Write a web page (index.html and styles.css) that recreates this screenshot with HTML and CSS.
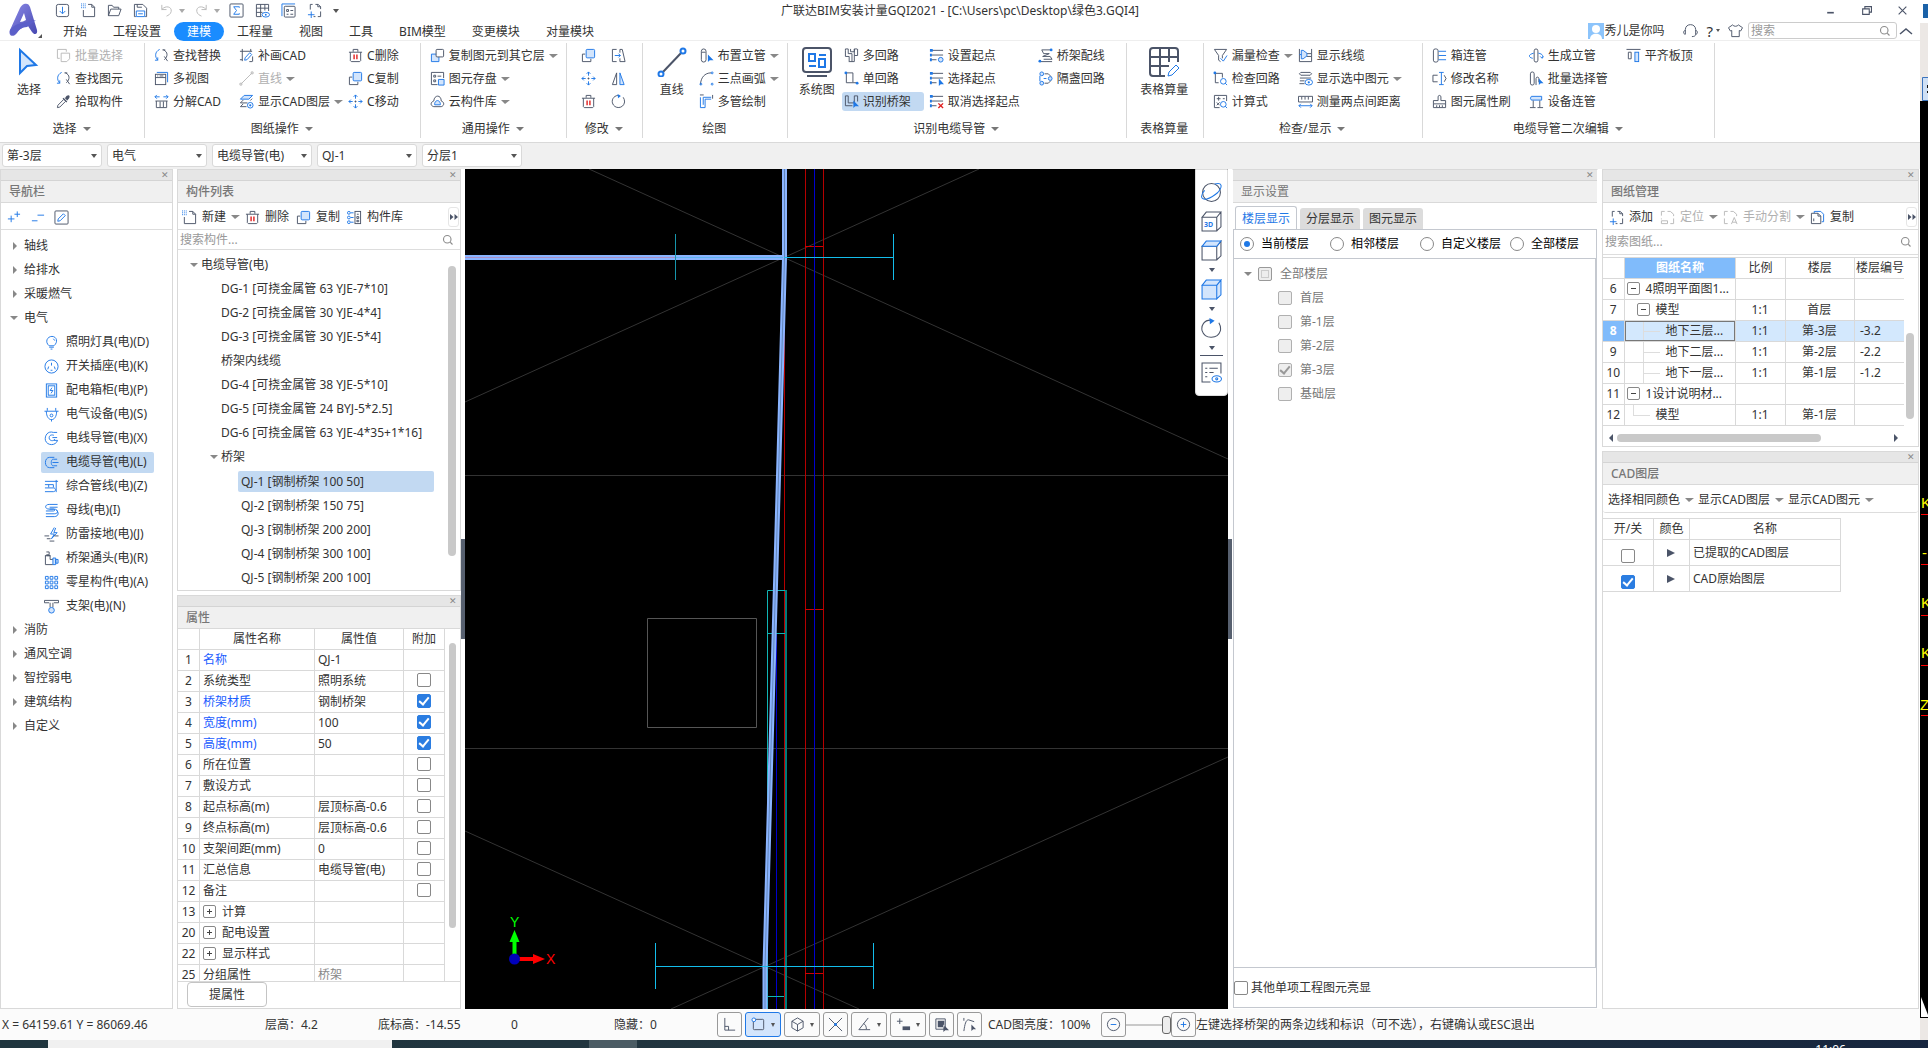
FILE: index.html
```
<!DOCTYPE html>
<html lang="zh-CN">
<head>
  <meta charset="UTF-8">
  <meta name="viewport" content="width=device-width, initial-scale=1">
  <title>广联达BIM安装计量GQI2021</title>
  <link rel="stylesheet" href="styles.css">
</head>
<body>
  <!-- Icon sprite -->
  <svg class="sprite" aria-hidden="true">
    <symbol id="i-import" viewBox="0 0 16 16"><rect class="k" x="1.5" y="1.5" width="13" height="13" rx="2"/><path class="b" d="M8 4v7M5 8.5l3 3 3-3"/></symbol>
    <symbol id="i-new" viewBox="0 0 16 16"><path class="k" d="M7.500 1.500h4l3 3v10h-12v-7M11.500 1.500v3h3"/><path class="bd" d="M0 1h5M0 3h5M0 5h5"/></symbol>
    <symbol id="i-open" viewBox="0 0 16 16"><path class="k" d="M1.500 13.500v-11h4l1.500 2h5.500v2M1.500 13.500l2.500-7h11l-2.500 7z"/></symbol>
    <symbol id="i-save" viewBox="0 0 16 16"><path class="k" d="M3 14.500H1.500v-13h9l4 4v9H13M4.500 1.500v3h5"/><path class="b" d="M3.500 14.500v-6h9v6zM5.500 11.500h5"/></symbol>
    <symbol id="i-undo" viewBox="0 0 16 16"><path class="g" d="M3 2v5h5M3 7c4-5 11-3 10 2-.5 3-3 4-5 5"/></symbol>
    <symbol id="i-redo" viewBox="0 0 16 16"><path class="g" d="M13 2v5H8M13 7C9 2 2 4 3 9c.5 3 3 4 5 5"/></symbol>
    <symbol id="i-sum" viewBox="0 0 16 16"><rect class="k" x="1" y="1" width="14" height="14" rx="1"/><path class="b" d="M11 5V4H5l3 4-3 4h6v-1"/></symbol>
    <symbol id="i-gridview" viewBox="0 0 16 16"><path class="k" d="M7 14.500H1.500v-13h13v7M1.500 5.500h13M1.500 10H8M6 1.500v13M10.500 1.500V8"/><ellipse class="b" cx="11.500" cy="12.500" rx="4" ry="2.500"/><circle class="bf" cx="11.500" cy="12.500" r="1"/></symbol>
    <symbol id="i-form" viewBox="0 0 16 16"><path class="b" d="M1 14V1h14"/><rect class="k" x="3.500" y="3.500" width="11.500" height="11.500" rx="1"/><path class="k" d="M6 7h2v2H6zM10 8h3M6 12h2M10 12h3"/></symbol>
    <symbol id="i-newdoc" viewBox="0 0 16 16"><path class="k" d="M3.500 7V1.500H6M9 1.500h3l2.500 2.500v2.500M14.500 9v5.500h-3M9 14.500H7M11.500 1.500V4h3"/><path class="b" d="M4.500 9v7M1 12.500h7"/></symbol>
    <symbol id="i-copy" viewBox="0 0 16 16"><path class="k" d="M4.500 6.500h-3v8h9v-3"/><rect class="lb" x="5.500" y="1.500" width="9" height="9" rx="1"/></symbol>
    <symbol id="i-copyg" viewBox="0 0 16 16"><path class="g" d="M4 11H1.500V1.500H11V4"/><path class="g" d="M5.500 5.500h9v6l-3 3h-6z"/></symbol>
    <symbol id="i-copyk" viewBox="0 0 16 16"><path class="lb" d="M1.500 6.500h8v8h-8z"/><rect class="kw" x="6.500" y="1.500" width="8" height="8" rx="1"/></symbol>
    <symbol id="i-find" viewBox="0 0 16 16"><path class="b" d="M6 1.500C1 4 .500 9 4 13M4 13v-3M4 13H1"/><path class="k" d="M10 2c5 2 5 7 1 10.500M9 2h3M11 9l3.500 5"/></symbol>
    <symbol id="i-pick" viewBox="0 0 16 16"><path class="kf" d="M8 4l4 4-1 1-4-4zM10 4c2-4 6-3 4 .500L12 7 9 4z"/><path class="k" d="M8 6l-6 6-.5 2.500L4 14l6-6"/></symbol>
    <symbol id="i-views" viewBox="0 0 16 16"><path class="b" d="M3 1.500h11.500V12"/><rect class="k" x="1.500" y="3.500" width="11" height="11"/><path class="k" d="M1.500 7h11M3.500 5.300h1M6 5.300h4"/></symbol>
    <symbol id="i-split" viewBox="0 0 16 16"><path class="b" d="M6 3H1M3 1L1 3l2 2M10 3h5M13 1l2 2-2 2"/><path class="k" d="M1.500 7.500h13M2.500 14.500v-7M13.500 14.500v-7M2.500 14.500h11M6.500 14v-6M10 14v-6"/></symbol>
    <symbol id="i-draw" viewBox="0 0 16 16"><path class="k" d="M1 3.500h13M3.500 1v13M3.500 12.500H1M12.500 3.500V1M14.500 9v5.500M11 14.500h3"/><path class="b" d="M6 13l.5-2.500L11.500 5l2 2L8.500 12.500z"/></symbol>
    <symbol id="i-lineg" viewBox="0 0 16 16"><path class="g" d="M2.500 13.500l11-11M1 13h2v2H1zM13 1h2v2h-2z"/></symbol>
    <symbol id="i-layers" viewBox="0 0 16 16"><path class="lb" d="M5.500 1.500h9l-4 4h-9z"/><path class="k" d="M12 7l2-2M9 9.500H1.500l3-3M8 13.500H1.500l3-3"/><circle class="b" cx="12" cy="12" r="3"/><circle class="bf" cx="12" cy="12" r="1.200"/></symbol>
    <symbol id="i-trash" viewBox="0 0 16 16"><path class="k" d="M1 4.500h14M5.500 4V1.500h5V4M2.500 4.500v9l1 1h9l1-1v-9"/><path class="r" d="M6.500 7v5M9.500 7v5"/></symbol>
    <symbol id="i-move" viewBox="0 0 16 16"><path class="b" d="M8 1v4M6 3l2-2 2 2M8 15v-4M6 13l2 2 2-2M1 8h4M3 6L1 8l2 2M15 8h-4M13 6l2 2-2 2"/><path class="k" d="M8 7v2M7 8h2"/></symbol>
    <symbol id="i-store" viewBox="0 0 16 16"><path class="k" d="M8 14.500H1.500v-13h13v6M4 4.500h2v2H4zM8 5.500h4M4 9.500h2v2H4z"/><path class="lb" d="M9 9h6v6H9z"/></symbol>
    <symbol id="i-cloud" viewBox="0 0 16 16"><path class="k" d="M4 13.500c-4-1-3.500-5 0-6 .5-7 8-7 8 0 3.500 1 3.500 5 0 6z"/><path class="lb" d="M5 11.500h6V10c-1-4-5-4-6 0z"/></symbol>
    <symbol id="i-extend" viewBox="0 0 16 16"><path class="k" d="M6 1.500H1.500v13H6M9.500 5V1.500H12l3 13H9.500V11"/><path class="b" d="M4 8h6M8 6l2 2-2 2"/></symbol>
    <symbol id="i-mirror" viewBox="0 0 16 16"><path class="k" d="M6 2v12.500H1.500z"/><path class="lb" d="M9.500 2v12.500H14z"/></symbol>
    <symbol id="i-rotate" viewBox="0 0 16 16"><path class="k" d="M9 1.500C4 1 .500 5 1.500 9.500c2 7 12 6.500 13-1 0-2-.5-3.500-1.500-5"/><path class="bf" d="M7 0l3.500 2L7.500 4.500z"/></symbol>
    <symbol id="i-riser" viewBox="0 0 16 16"><rect class="k" x="2.500" y="1" width="5" height="14" rx="2.500"/><path class="k" d="M3 4.500h4"/><path class="bf" d="M9.500 7v8l2-2h4z"/></symbol>
    <symbol id="i-arc" viewBox="0 0 16 16"><path class="k" d="M1.500 14.500C2 7 6 2 13 2"/><circle class="b" cx="14" cy="2" r="1"/><circle class="b" cx="14" cy="14" r="1"/><circle class="b" cx="2" cy="14" r="1"/></symbol>
    <symbol id="i-pipes" viewBox="0 0 16 16"><path class="b" d="M1.500 3.500v11h5v-9H13M13 3.500H4.500v8"/><path class="k" d="M1 1h4M14.500 1v4"/></symbol>
    <symbol id="i-multi" viewBox="0 0 16 16"><path class="k" d="M1.500 3v6h4v5M4.500 1v5h4v8.500M11 14.500V8h3.500V1M7 1v3h4v-3M5 14.500h6M1.500 3V1h3M11 8V1h3"/></symbol>
    <symbol id="i-single" viewBox="0 0 16 16"><path class="k" d="M2.500 2v10.500H13M2.500 2h7v10"/><circle class="bf" cx="2" cy="2" r="1.500"/><circle class="bf" cx="14" cy="13" r="1.500"/></symbol>
    <symbol id="i-tray" viewBox="0 0 16 16"><path class="k" d="M1.500 2v10.500H9M4.500 2v7.500H11V2M1.500 2h3M14.500 2v6M11 2h3.500"/><path class="bf" d="M10 7v8l2-2h4z"/></symbol>
    <symbol id="i-start" viewBox="0 0 16 16"><path class="k" d="M2 2.500h13M2 7.500h13M2 12.500h6"/><path class="bf" d="M1 1h3v3H1zM1 6h2v3H1zM1 11h2v3H1z"/><circle class="lb" cx="12.500" cy="12.500" r="2.500"/></symbol>
    <symbol id="i-pickstart" viewBox="0 0 16 16"><path class="k" d="M2 2.500h13M2 7.500h13M2 12.500h6"/><path class="bf" d="M1 1h3v3H1zM1 6h2v3H1zM1 11h2v3H1zM10.500 8v8l2-2h3.500z"/></symbol>
    <symbol id="i-unstart" viewBox="0 0 16 16"><path class="k" d="M2 2.500h13M2 7.500h13M2 12.500h6"/><path class="bf" d="M1 1h3v3H1zM1 6h2v3H1zM1 11h2v3H1z"/><path class="r" d="M10 10l5 5M15 10l-5 5"/></symbol>
    <symbol id="i-wire" viewBox="0 0 16 16"><path class="k" d="M14 2H4l2 4h6M12 6l-7 3h8M13 9l2 3H6M2 14.500h13"/><circle class="bf" cx="14" cy="2" r="1.500"/><circle class="bf" cx="2" cy="14" r="1.500"/></symbol>
    <symbol id="i-box" viewBox="0 0 16 16"><path class="k" d="M7 3h4l3 3M14 10l-3 3H7"/><circle class="lb" cx="4" cy="3" r="2"/><circle class="lb" cx="4" cy="13" r="2"/><circle class="lb" cx="13" cy="8" r="2"/><path class="b" d="M2 5v6M6 8h3"/></symbol>
    <symbol id="i-filter" viewBox="0 0 16 16"><path class="k" d="M1.500 1.500h13L10 8v3M1.500 1.500L6 8v5l2 1.500"/><path class="b" d="M8 11l3 3 4-6"/></symbol>
    <symbol id="i-checkloop" viewBox="0 0 16 16"><path class="k" d="M2.500 3v9.500H6M3 2.500h7V7"/><circle class="bf" cx="2" cy="2" r="1.500"/><circle class="b" cx="11" cy="11" r="3"/><path class="b" d="M13 13l2 2"/></symbol>
    <symbol id="i-calc" viewBox="0 0 16 16"><path class="k" d="M7 14.500H1.500v-13h13v6M4 5h4M6 3v4M10.500 5h2M4 9l3 3M7 9l-3 3"/><circle class="b" cx="11" cy="11" r="3"/><path class="b" d="M13 13l2 2"/></symbol>
    <symbol id="i-cable" viewBox="0 0 16 16"><path class="k" d="M1.500 1v13.500h13V1M9 6h5M9 9h5"/><path class="lb" d="M3.500 2.500h2l4 3v3l-4 3h-2zM1.500 7h2"/></symbol>
    <symbol id="i-showsel" viewBox="0 0 16 16"><path class="k" d="M3 1.500h10l1.500 1.500L13 4.500H3L1.500 3zM14 7.500H2M2 10.500h5M1.500 13.500H7"/><ellipse class="b" cx="11.500" cy="12" rx="4" ry="3"/><circle class="bf" cx="11.500" cy="12" r="1.200"/></symbol>
    <symbol id="i-measure" viewBox="0 0 16 16"><path class="k" d="M.500 8.500v-6h15v6zM4 3v3M7.500 3v3M11 3v3"/><path class="b" d="M1 12.500h14M3 10.500l-2 2 2 2M13 10.500l2 2-2 2"/></symbol>
    <symbol id="i-boxpipe" viewBox="0 0 16 16"><rect class="k" x="1.500" y="1" width="5" height="14" rx="2"/><path class="b" d="M7 3.500h8M7 8h8M7 12.500h8"/></symbol>
    <symbol id="i-rename" viewBox="0 0 16 16"><path class="k" d="M6 4.500H1v7h5M13 4.500l2 3.500-2 3.500"/><path class="b" d="M10 1.500v13M7.500 1.500h5M7.500 14.500h5"/></symbol>
    <symbol id="i-brush" viewBox="0 0 16 16"><path class="k" d="M6.500 7V3c0-2 3-2 3 0v4h5v3.500h-13V7zM1.500 10.500v4h13v-4M5 14v-2M8 14v-2M11 14v-2"/></symbol>
    <symbol id="i-genriser" viewBox="0 0 16 16"><rect class="k" x="5.500" y="1" width="4" height="14" rx="2"/><path class="b" d="M5 5.500C-1 7-1 10 4 11M10 5.500c5 1 5 3 4 5M12 9l2 2 1.500-2"/></symbol>
    <symbol id="i-batch" viewBox="0 0 16 16"><rect class="k" x="1.500" y="1" width="4" height="14" rx="2"/><path class="k" d="M7.500 15V8c0-2 3-2 3 0v4"/><path class="bf" d="M10.500 8v7l2-2h3z"/></symbol>
    <symbol id="i-device" viewBox="0 0 16 16"><path class="lb" d="M2.500 2.500h11v4h-11l-1-2z"/><path class="k" d="M4.500 7v7M11.500 7v7M1 14.500h6M9 14.500h6"/></symbol>
    <symbol id="i-align" viewBox="0 0 16 16"><path class="k" d="M.500 1.500h15M2.500 4.500h3v7h-3z"/><rect class="lb" x="9.500" y="4.500" width="4" height="10"/></symbol>
    <symbol id="i-pencil" viewBox="0 0 16 16"><rect class="k" x="1" y="1" width="14" height="14" rx="1"/><path class="b" d="M4 12l.5-2.500L10 4l2 2-5.500 5.500z"/></symbol>
    <symbol id="i-plusplus" viewBox="0 0 16 16"><path class="b" d="M2 9.500h7M5.500 6v7M9 4.500h6M12 1.500v6"/></symbol>
    <symbol id="i-minusminus" viewBox="0 0 16 16"><path class="b" d="M2 11.500h6M8 5.500h7"/></symbol>
    <symbol id="i-lib" viewBox="0 0 16 16"><circle class="b" cx="2" cy="3" r="1.500"/><circle class="b" cx="2" cy="8" r="1.500"/><circle class="b" cx="2" cy="13" r="1.500"/><path class="b" d="M4 3h3M4 8h3M4 13h3"/><rect class="k" x="8.500" y="1.500" width="6" height="13"/><path class="k" d="M10.500 4.500h2M10.500 7h2v2h-2zM10.500 11h2v1.500h-2z"/></symbol>
    <symbol id="i-bulb" viewBox="0 0 16 16"><path class="b" d="M5.500 11.500c-5-4-2-10 3-10s7 6 2 10zM5.500 13h5M7 15h2M10 4l1.500 2"/></symbol>
    <symbol id="i-socket" viewBox="0 0 16 16"><circle class="b" cx="8" cy="8" r="7"/><path class="b" d="M8 4v3M5 8l-1 3M11 8l1 3M7 12h2"/></symbol>
    <symbol id="i-panel" viewBox="0 0 16 16"><rect class="b" x="2.500" y="1" width="11" height="14"/><rect class="b" x="4.500" y="3" width="7" height="10"/><path class="b" d="M8.500 5l-2 3h3l-2 3"/></symbol>
    <symbol id="i-plug" viewBox="0 0 16 16"><path class="b" d="M.500 4.500h15M3.500 1v3M12.500 1v3M2.500 4.500c0 12 11 12 11 0"/><circle class="b" cx="8" cy="9" r="1.500"/><path class="b" d="M8 13v2.500"/></symbol>
    <symbol id="i-wirepipe" viewBox="0 0 16 16"><path class="b" d="M10 1.500C4-.500.500 5 1.500 10c2 6 11 6 13 0h-4M10.500 4.500c-4-1-5 1-5 3 0 3 5 4 6 1M10 1.500h4M14 7H9"/></symbol>
    <symbol id="i-cablepipe" viewBox="0 0 16 16"><path class="b" d="M11 2.500H6c-6 0-6 11 0 11h5M10 4.500C7 4 7 12 10 11.500M10 4.500h4M9 8h6.500M10 11.500h4"/></symbol>
    <symbol id="i-combo" viewBox="0 0 16 16"><path class="b" d="M1 2.500h14M1 6h9v3M1 13.500h9c3 0 3-4 0-4H1M13 1v13M5 6v3"/></symbol>
    <symbol id="i-bus" viewBox="0 0 16 16"><path class="b" d="M14.500 1.500h-9c-5 0-5 5 0 5H10c2 0 2 2 0 2H2M14.500 4.500H6M2 11.500h9c5 0 4-5 0-5H6M2 14.500h9c5 0 5-5 2-7"/></symbol>
    <symbol id="i-bolt" viewBox="0 0 16 16"><path class="b" d="M11 .500L7 7.500h4l-3 5 6-6.500h-3.500l2-5"/><path class="k" d="M.500 9.500h5M11 9.500h4.500M3 12.500h4M6 15h5"/></symbol>
    <symbol id="i-elbow" viewBox="0 0 16 16"><path class="k" d="M2.500 5h4v4h3M1.500 5v9.500h8M2.500 1h3v3h-3M1 5h6"/><path class="lb" d="M9.500 7.500h3v7h-3zM12.500 9h2.500v4h-2.500z"/></symbol>
    <symbol id="i-nine" viewBox="0 0 16 16"><path class="b" d="M1.500 1.500h3v3h-3zM6.500 1.500h3v3h-3zM11.500 1.500h3v3h-3zM1.500 6.500h3v3h-3zM6.500 6.500h3v3h-3zM11.500 6.500h3v3h-3zM1.500 11.500h3v3h-3zM6.500 11.500h3v3h-3zM11.500 11.500h3v3h-3z"/></symbol>
    <symbol id="i-hanger" viewBox="0 0 16 16"><path class="k" d="M.500 4V1.500h15V4M.500 4h5M10.500 4h5M6.500 4v5M9.500 4v5"/><circle class="lb" cx="8" cy="12" r="3"/></symbol>
    <symbol id="i-search" viewBox="0 0 16 16"><circle class="s" cx="7" cy="7" r="5"/><path class="s" d="M11 11l3 3"/></symbol>
    <symbol id="i-headset" viewBox="0 0 16 16"><path class="k" d="M2.500 12V7c0-7 11-7 11 0v5c0 2-2 2.500-4 2.500M2.500 8C0 8 0 12 2.500 12M13.500 8c2.500 0 2.500 4 0 4"/></symbol>
    <symbol id="i-shirt" viewBox="0 0 16 16"><path class="k" d="M5 2L.500 5l2 3.500L4 8v6.500h8V8l1.500.5 2-3.500L11 2c-1 2-5 2-6 0z"/></symbol>
    <symbol id="i-locate" viewBox="0 0 16 16"><path class="g" d="M1.500 6V1.500H5M8 1.500h3l3.500 3v2M14.500 9v5.500H11M1.500 9v1M8 14.500H1.500v-3H8z"/></symbol>
    <symbol id="i-divide" viewBox="0 0 16 16"><path class="g" d="M1.500 6V1.500H5M8 1.500h3l3.500 3v2M1.500 9v5.500H5M9 15l3-7 3 7M10 13h4"/></symbol>
    <symbol id="i-copydoc" viewBox="0 0 16 16"><path class="b" d="M4.500 3.500v-2h7l3 3v8h-2"/><path class="k" d="M1.500 3.500h7l3 3v8h-10zM8.500 3.500v3h3M4 9v3"/></symbol>
    <symbol id="i-cube" viewBox="0 0 20 20"><path class="k" d="M1 6h14v13H1zM15 19l4-4V1l-4 5"/><path class="lb" d="M1 6l4-5h14l-4 5z"/></symbol>
    <symbol id="i-cubeblue" viewBox="0 0 20 20"><path class="lb" d="M1 6h14v13H1zM1 6l4-5h14l-4 5zM15 19l4-4V1l-4 5z"/></symbol>
    <symbol id="i-cubeplain" viewBox="0 0 20 20"><path class="k" d="M1 6h14v13H1zM1 6l4-5h14l-4 5zM15 19l4-4V1"/></symbol>
    <symbol id="i-orbit" viewBox="0 0 20 20"><circle class="k" cx="10" cy="10" r="8.500"/><path class="b" d="M13 2c7-2 8 2 3 8C8 17 1 18 .500 14c0-2 1-4 3-6"/></symbol>
    <symbol id="i-turn" viewBox="0 0 20 20"><path class="k" d="M9 2C3 2 0 7 1 12c3 9 15 8 17.500 0 .5-3 0-5-1.500-7.500"/><path class="bf" d="M8 0l5 2.500L8.500 6z"/></symbol>
    <symbol id="i-listeye" viewBox="0 0 20 20"><path class="k" d="M9 19H1V1h18v10M4 6h2M8 6h8M4 10h2M8 10h4M4 14h2"/><ellipse class="b" cx="15" cy="16" rx="4.500" ry="3"/><circle class="b" cx="15" cy="16" r="1"/></symbol>
  </svg>

  <div class="desktop">
    <div class="window">
      <header class="header">
        <svg class="logo" viewBox="0 0 36 36">
          <defs><linearGradient id="lg" x1="0" y1="0" x2="1" y2="1"><stop offset="0" stop-color="#8d8be8"/><stop offset="1" stop-color="#4547b0"/></linearGradient></defs>
          <path fill="url(#lg)" d="M17 1c3-1 5 0 6 3l7 23c1 5-3 5-5 2l-4-6c-6 1-8 3-11 7-4 5-9 3-7-3L13 5c1-2 2-3 4-4zm0 9l-4 9c2 0 4-1 6-2z"/>
          <path fill="#5b5fc9" d="M3 27C8 19 20 20 29 17l-9 7c-5 0-9 3-12 7-3 2-6 0-5-4z"/>
          <path fill="#555" d="M31 35h4v-4z"/>
        </svg>
        <div class="header-main">
          <div class="title-row">
            <div class="quick">
              <button aria-label="导入"><svg class="icon"><use href="#i-import"/></svg></button>
              <button aria-label="新建"><svg class="icon"><use href="#i-new"/></svg></button>
              <button aria-label="打开"><svg class="icon"><use href="#i-open"/></svg></button>
              <button aria-label="保存"><svg class="icon"><use href="#i-save"/></svg></button>
              <button aria-label="撤销" class="split"><svg class="icon"><use href="#i-undo"/></svg></button>
              <button aria-label="恢复" class="split"><svg class="icon"><use href="#i-redo"/></svg></button>
              <button aria-label="汇总"><svg class="icon"><use href="#i-sum"/></svg></button>
              <button aria-label="表格"><svg class="icon"><use href="#i-gridview"/></svg></button>
              <button aria-label="报表"><svg class="icon"><use href="#i-form"/></svg></button>
              <button aria-label="添加图纸"><svg class="icon"><use href="#i-newdoc"/></svg></button>
              <button aria-label="更多" class="more"></button>
            </div>
            <h1 class="title">广联达BIM安装计量GQI2021 - [C:\Users\pc\Desktop\绿色3.GQI4]</h1>
            <div class="win-buttons">
              <button aria-label="最小化"><svg viewBox="0 0 10 10"><path class="w" d="M2 7h6"/></svg></button>
              <button aria-label="还原"><svg viewBox="0 0 10 10"><path class="k" d="M1.500 3.500h6v5h-6zM3.500 3V1.500h6v5H8"/></svg></button>
              <button aria-label="关闭"><svg viewBox="0 0 10 10"><path class="k" d="M1.500 1.500l7 7M8.500 1.500l-7 7"/></svg></button>
            </div>
          </div>
          <div class="menu-row">
            <nav class="menu">
              <button>开始</button>
              <button>工程设置</button>
              <button class="active">建模</button>
              <button>工程量</button>
              <button>视图</button>
              <button>工具</button>
              <button>BIM模型</button>
              <button>变更模块</button>
              <button>对量模块</button>
            </nav>
            <div class="account">
              <svg class="avatar" viewBox="0 0 16 16"><path fill="#8cc4fb" d="M0 0h16v16H0z"/><circle cx="8" cy="6" r="4" fill="#fff"/><path fill="#fff" d="M2 16c0-7 12-7 12 0z"/></svg>
              <span class="user">秀儿是你吗</span>
              <button aria-label="客服"><svg class="icon"><use href="#i-headset"/></svg></button>
              <button class="help" aria-label="帮助">?</button>
              <button aria-label="皮肤"><svg class="icon"><use href="#i-shirt"/></svg></button>
              <label class="search"><input type="text" placeholder="搜索" aria-label="搜索"><svg class="icon"><use href="#i-search"/></svg></label>
              <button aria-label="收起"><svg class="fold" viewBox="0 0 14 8"><path class="w" d="M1 7l6-5 6 5"/></svg></button>
            </div>
          </div>
        </div>
      </header>

      <!-- Ribbon -->
      <section class="ribbon">
        <div class="group">
          <div class="group-body">
            <button class="big"><svg viewBox="0 0 30 30"><path class="lb2" d="M6 3v23l7-7 9-1z"/></svg>选择</button>
            <div class="col">
              <button class="tool" disabled><svg class="icon"><use href="#i-copyg"/></svg>批量选择</button>
              <button class="tool"><svg class="icon"><use href="#i-find"/></svg>查找图元</button>
              <button class="tool"><svg class="icon"><use href="#i-pick"/></svg>拾取构件</button>
            </div>
          </div>
          <div class="group-label drop">选择</div>
        </div>
        <div class="group">
          <div class="group-body">
            <div class="col">
              <button class="tool"><svg class="icon"><use href="#i-find"/></svg>查找替换</button>
              <button class="tool"><svg class="icon"><use href="#i-views"/></svg>多视图</button>
              <button class="tool"><svg class="icon"><use href="#i-split"/></svg>分解CAD</button>
            </div>
            <div class="col">
              <button class="tool"><svg class="icon"><use href="#i-draw"/></svg>补画CAD</button>
              <button class="tool drop" disabled><svg class="icon"><use href="#i-lineg"/></svg>直线</button>
              <button class="tool drop"><svg class="icon"><use href="#i-layers"/></svg>显示CAD图层</button>
            </div>
            <div class="col">
              <button class="tool"><svg class="icon"><use href="#i-trash"/></svg>C删除</button>
              <button class="tool"><svg class="icon"><use href="#i-copy"/></svg>C复制</button>
              <button class="tool"><svg class="icon"><use href="#i-move"/></svg>C移动</button>
            </div>
          </div>
          <div class="group-label drop">图纸操作</div>
        </div>
        <div class="group">
          <div class="group-body">
            <div class="col">
              <button class="tool drop"><svg class="icon"><use href="#i-copyk"/></svg>复制图元到其它层</button>
              <button class="tool drop"><svg class="icon"><use href="#i-store"/></svg>图元存盘</button>
              <button class="tool drop"><svg class="icon"><use href="#i-cloud"/></svg>云构件库</button>
            </div>
          </div>
          <div class="group-label drop">通用操作</div>
        </div>
        <div class="group">
          <div class="group-body icon-grid">
            <button aria-label="复制"><svg class="icon"><use href="#i-copy"/></svg></button>
            <button aria-label="延伸"><svg class="icon"><use href="#i-extend"/></svg></button>
            <button aria-label="移动"><svg class="icon"><use href="#i-move"/></svg></button>
            <button aria-label="镜像"><svg class="icon"><use href="#i-mirror"/></svg></button>
            <button aria-label="删除"><svg class="icon"><use href="#i-trash"/></svg></button>
            <button aria-label="旋转"><svg class="icon"><use href="#i-rotate"/></svg></button>
          </div>
          <div class="group-label drop">修改</div>
        </div>
        <div class="group">
          <div class="group-body">
            <button class="big"><svg viewBox="0 0 30 30"><path class="k2" d="M5 26L25 5"/><circle class="bw" cx="4" cy="27" r="2.500"/><circle class="bw" cx="26" cy="4" r="2.500"/></svg>直线</button>
            <div class="col">
              <button class="tool drop"><svg class="icon"><use href="#i-riser"/></svg>布置立管</button>
              <button class="tool drop"><svg class="icon"><use href="#i-arc"/></svg>三点画弧</button>
              <button class="tool"><svg class="icon"><use href="#i-pipes"/></svg>多管绘制</button>
            </div>
          </div>
          <div class="group-label">绘图</div>
        </div>
        <div class="group">
          <div class="group-body">
            <button class="big"><svg viewBox="0 0 30 30"><rect class="k2" x="1" y="1" width="28" height="24" rx="3"/><path class="b2" d="M7 7h6v7H7zM17 8h7M17 12h6v8h-6zM7 19h7"/><path class="k2" d="M5 29h20"/></svg>系统图</button>
            <div class="col">
              <button class="tool"><svg class="icon"><use href="#i-multi"/></svg>多回路</button>
              <button class="tool"><svg class="icon"><use href="#i-single"/></svg>单回路</button>
              <button class="tool active"><svg class="icon"><use href="#i-tray"/></svg>识别桥架</button>
            </div>
            <div class="col">
              <button class="tool"><svg class="icon"><use href="#i-start"/></svg>设置起点</button>
              <button class="tool"><svg class="icon"><use href="#i-pickstart"/></svg>选择起点</button>
              <button class="tool"><svg class="icon"><use href="#i-unstart"/></svg>取消选择起点</button>
            </div>
            <div class="col">
              <button class="tool"><svg class="icon"><use href="#i-wire"/></svg>桥架配线</button>
              <button class="tool"><svg class="icon"><use href="#i-box"/></svg>隔盏回路</button>
            </div>
          </div>
          <div class="group-label drop">识别电缆导管</div>
        </div>
        <div class="group">
          <div class="group-body">
            <button class="big wide"><svg viewBox="0 0 30 30"><path class="k2" d="M16 29H4c-2 0-3-1-3-3V4c0-2 1-3 3-3h22c2 0 3 1 3 3v11M1 10h28M1 19h19M11 1v28M20 1v14"/><path class="b" d="M19 29l1-4 7-7 3 3-7 7z"/></svg>表格算量</button>
          </div>
          <div class="group-label">表格算量</div>
        </div>
        <div class="group">
          <div class="group-body">
            <div class="col">
              <button class="tool drop"><svg class="icon"><use href="#i-filter"/></svg>漏量检查</button>
              <button class="tool"><svg class="icon"><use href="#i-checkloop"/></svg>检查回路</button>
              <button class="tool"><svg class="icon"><use href="#i-calc"/></svg>计算式</button>
            </div>
            <div class="col">
              <button class="tool"><svg class="icon"><use href="#i-cable"/></svg>显示线缆</button>
              <button class="tool drop"><svg class="icon"><use href="#i-showsel"/></svg>显示选中图元</button>
              <button class="tool"><svg class="icon"><use href="#i-measure"/></svg>测量两点间距离</button>
            </div>
          </div>
          <div class="group-label drop">检查/显示</div>
        </div>
        <div class="group">
          <div class="group-body">
            <div class="col">
              <button class="tool"><svg class="icon"><use href="#i-boxpipe"/></svg>箱连管</button>
              <button class="tool"><svg class="icon"><use href="#i-rename"/></svg>修改名称</button>
              <button class="tool"><svg class="icon"><use href="#i-brush"/></svg>图元属性刷</button>
            </div>
            <div class="col">
              <button class="tool"><svg class="icon"><use href="#i-genriser"/></svg>生成立管</button>
              <button class="tool"><svg class="icon"><use href="#i-batch"/></svg>批量选择管</button>
              <button class="tool"><svg class="icon"><use href="#i-device"/></svg>设备连管</button>
            </div>
            <div class="col">
              <button class="tool"><svg class="icon"><use href="#i-align"/></svg>平齐板顶</button>
            </div>
          </div>
          <div class="group-label drop">电缆导管二次编辑</div>
        </div>
      </section>

      <!-- Current floor / discipline / component -->
      <section class="context-bar">
        <label class="pick"><select aria-label="楼层"><option>第-3层</option></select></label>
        <label class="pick"><select aria-label="专业"><option>电气</option></select></label>
        <label class="pick"><select aria-label="构件类型"><option>电缆导管(电)</option></select></label>
        <label class="pick"><select aria-label="构件"><option>QJ-1</option></select></label>
        <label class="pick"><select aria-label="分层"><option>分层1</option></select></label>
      </section>

      <main class="work">
        <!-- Navigation -->
        <section class="panel nav-panel">
          <div class="panel-strip"><button aria-label="关闭">✕</button></div>
          <h2 class="panel-title">导航栏</h2>
          <div class="panel-tools nav-tools">
            <button aria-label="展开"><svg class="icon"><use href="#i-plusplus"/></svg></button>
            <button aria-label="折叠"><svg class="icon"><use href="#i-minusminus"/></svg></button>
            <button aria-label="编辑"><svg class="icon"><use href="#i-pencil"/></svg></button>
          </div>
          <ul class="tree nav-tree">
            <li class="node closed">轴线</li>
            <li class="node closed">给排水</li>
            <li class="node closed">采暖燃气</li>
            <li class="node open">电气</li>
            <li class="leaf"><span><svg class="icon"><use href="#i-bulb"/></svg>照明灯具(电)(D)</span></li>
            <li class="leaf"><span><svg class="icon"><use href="#i-socket"/></svg>开关插座(电)(K)</span></li>
            <li class="leaf"><span><svg class="icon"><use href="#i-panel"/></svg>配电箱柜(电)(P)</span></li>
            <li class="leaf"><span><svg class="icon"><use href="#i-plug"/></svg>电气设备(电)(S)</span></li>
            <li class="leaf"><span><svg class="icon"><use href="#i-wirepipe"/></svg>电线导管(电)(X)</span></li>
            <li class="leaf selected"><span><svg class="icon"><use href="#i-cablepipe"/></svg>电缆导管(电)(L)</span></li>
            <li class="leaf"><span><svg class="icon"><use href="#i-combo"/></svg>综合管线(电)(Z)</span></li>
            <li class="leaf"><span><svg class="icon"><use href="#i-bus"/></svg>母线(电)(I)</span></li>
            <li class="leaf"><span><svg class="icon"><use href="#i-bolt"/></svg>防雷接地(电)(J)</span></li>
            <li class="leaf"><span><svg class="icon"><use href="#i-elbow"/></svg>桥架通头(电)(R)</span></li>
            <li class="leaf"><span><svg class="icon"><use href="#i-nine"/></svg>零星构件(电)(A)</span></li>
            <li class="leaf"><span><svg class="icon"><use href="#i-hanger"/></svg>支架(电)(N)</span></li>
            <li class="node closed">消防</li>
            <li class="node closed">通风空调</li>
            <li class="node closed">智控弱电</li>
            <li class="node closed">建筑结构</li>
            <li class="node closed">自定义</li>
          </ul>
        </section>

        <div class="stack">
          <!-- Component list -->
          <section class="panel">
            <div class="panel-strip"><button aria-label="关闭">✕</button></div>
            <h2 class="panel-title">构件列表</h2>
            <div class="panel-tools">
              <button class="tool drop"><svg class="icon"><use href="#i-new"/></svg>新建</button>
              <button class="tool"><svg class="icon"><use href="#i-trash"/></svg>删除</button>
              <button class="tool"><svg class="icon"><use href="#i-copy"/></svg>复制</button>
              <button class="tool"><svg class="icon"><use href="#i-lib"/></svg>构件库</button>
              <button class="overflow" aria-label="更多"><svg viewBox="0 0 8 6"><path class="kf" d="M0 0l3.500 3L0 6zM4.500 0L8 3 4.500 6z"/></svg></button>
            </div>
            <label class="panel-search"><input type="text" placeholder="搜索构件..." aria-label="搜索构件"><svg class="icon"><use href="#i-search"/></svg></label>
            <div class="scroll-area">
              <ul class="tree comp-tree">
                <li class="l1">电缆导管(电)</li>
                <li class="l2">DG-1 [可挠金属管 63 YJE-7*10]</li>
                <li class="l2">DG-2 [可挠金属管 30 YJE-4*4]</li>
                <li class="l2">DG-3 [可挠金属管 30 YJE-5*4]</li>
                <li class="l2">桥架内线缆</li>
                <li class="l2">DG-4 [可挠金属管 38 YJE-5*10]</li>
                <li class="l2">DG-5 [可挠金属管 24 BYJ-5*2.5]</li>
                <li class="l2">DG-6 [可挠金属管 63 YJE-4*35+1*16]</li>
                <li class="l2 open">桥架</li>
                <li class="l3 selected"><span>QJ-1 [钢制桥架 100 50]</span></li>
                <li class="l3"><span>QJ-2 [钢制桥架 150 75]</span></li>
                <li class="l3"><span>QJ-3 [钢制桥架 200 200]</span></li>
                <li class="l3"><span>QJ-4 [钢制桥架 300 100]</span></li>
                <li class="l3"><span>QJ-5 [钢制桥架 200 100]</span></li>
              </ul>
              <div class="vbar comp-bar"><i></i></div>
            </div>
          </section>

          <!-- Properties -->
          <section class="panel fill props">
            <div class="panel-strip"><button aria-label="关闭">✕</button></div>
            <h2 class="panel-title">属性</h2>
            <div class="scroll-area props-area">
              <table class="grid props-table">
                <colgroup><col class="c-no"><col class="c-name"><col class="c-val"><col class="c-add"></colgroup>
                <thead><tr><th></th><th>属性名称</th><th>属性值</th><th>附加</th></tr></thead>
                <tbody>
                  <tr><td>1</td><td class="key">名称</td><td>QJ-1</td><td></td></tr>
                  <tr><td>2</td><td>系统类型</td><td>照明系统</td><td><input type="checkbox" aria-label="系统类型"></td></tr>
                  <tr><td>3</td><td class="key">桥架材质</td><td>钢制桥架</td><td><input type="checkbox" checked aria-label="桥架材质"></td></tr>
                  <tr><td>4</td><td class="key">宽度(mm)</td><td>100</td><td><input type="checkbox" checked aria-label="宽度"></td></tr>
                  <tr><td>5</td><td class="key">高度(mm)</td><td>50</td><td><input type="checkbox" checked aria-label="高度"></td></tr>
                  <tr><td>6</td><td>所在位置</td><td></td><td><input type="checkbox" aria-label="所在位置"></td></tr>
                  <tr><td>7</td><td>敷设方式</td><td></td><td><input type="checkbox" aria-label="敷设方式"></td></tr>
                  <tr><td>8</td><td>起点标高(m)</td><td>层顶标高-0.6</td><td><input type="checkbox" aria-label="起点标高"></td></tr>
                  <tr><td>9</td><td>终点标高(m)</td><td>层顶标高-0.6</td><td><input type="checkbox" aria-label="终点标高"></td></tr>
                  <tr><td>10</td><td>支架间距(mm)</td><td>0</td><td><input type="checkbox" aria-label="支架间距"></td></tr>
                  <tr><td>11</td><td>汇总信息</td><td>电缆导管(电)</td><td><input type="checkbox" aria-label="汇总信息"></td></tr>
                  <tr><td>12</td><td>备注</td><td></td><td><input type="checkbox" aria-label="备注"></td></tr>
                  <tr><td>13</td><td><b class="exp plus"></b>计算</td><td></td><td></td></tr>
                  <tr><td>20</td><td><b class="exp plus"></b>配电设置</td><td></td><td></td></tr>
                  <tr><td>22</td><td><b class="exp plus"></b>显示样式</td><td></td><td></td></tr>
                  <tr><td>25</td><td>分组属性</td><td class="muted">桥架</td><td></td></tr>
                </tbody>
              </table>
              <div class="vbar props-bar"><i></i></div>
            </div>
            <div class="props-foot"><button class="plain">提属性</button></div>
          </section>
        </div>

        <div class="splitter left"><i></i></div>

        <!-- Drawing canvas -->
        <section class="canvas">
          <svg class="drawing">
            <g class="axis-lines">
              <path d="M124 0L319 88.500 763 290M0 233L319 88.500 514 0M0 662L300 797.500 394 840M206 840L300 797.500 763 588M0 306.500h763M0 579.500h763"/>
              <path class="column" d="M182.500 449.500h109v109h-109z"/>
            </g>
            <path class="cad-red" d="M319.500 88v752M340.500 0v840M358.500 0v840"/>
            <path class="cad-red short" d="M340 77.500h18M340 440.500h18M340 804.500h18"/>
            <path class="cad-blue" d="M349.500 0v840M311.500 464v376"/>
            <path class="cad-teal" d="M302.500 840V421.500H321M302 464.500h18M303 827.500h16"/>
            <path class="cad-darkteal" d="M321 421v419"/>
            <path class="tray" d="M0 88.500h319M319.500 0v89L300 797.500V840"/>
            <path class="tray-core" d="M319.500 0v89L300 797.500V840"/>
            <path class="tray-red" d="M0 88.500h210"/>
            <path class="tray-cyan" d="M210 88.500h108"/>
            <path class="cad-cyan" d="M319 88.500h109M428.500 65v46M190.500 774v46M408.500 774v46M190 797.500h218"/>
            <path class="cad-cyan dim" d="M210.500 65v46"/>
            <g class="ucs">
              <path class="y-axis" d="M49.500 790v-18"/><path class="y-head" d="M44.500 773l5-12 5 12z"/>
              <path class="x-axis" d="M50 790h20"/><path class="x-head" d="M68 785l12 5-12 5z"/>
              <circle cx="49.500" cy="790" r="5.500" fill="#00b"/>
              <text x="45" y="758" fill="#0f0">Y</text><text x="81" y="795" fill="red">X</text>
            </g>
          </svg>
          <div class="view-tools">
            <button aria-label="动态观察"><svg><use href="#i-orbit"/></svg></button>
            <button aria-label="三维" class="cube3d"><svg><use href="#i-cubeplain"/></svg><span>3D</span></button>
            <button aria-label="俯视" class="drop"><svg><use href="#i-cube"/></svg></button>
            <button aria-label="实体" class="drop"><svg><use href="#i-cubeblue"/></svg></button>
            <button aria-label="旋转" class="drop"><svg><use href="#i-turn"/></svg></button>
            <hr>
            <button aria-label="显示设置"><svg><use href="#i-listeye"/></svg></button>
          </div>
        </section>

        <div class="splitter right"><i></i></div>

        <!-- Display settings -->
        <section class="panel display">
          <div class="panel-strip"><button aria-label="关闭">✕</button></div>
          <h2 class="panel-title light">显示设置</h2>
          <div class="tabs">
            <button class="active">楼层显示</button>
            <button>分层显示</button>
            <button>图元显示</button>
          </div>
          <div class="tab-page">
            <div class="radios">
              <label><input type="radio" name="floor" checked>当前楼层</label>
              <label><input type="radio" name="floor">相邻楼层</label>
              <label><input type="radio" name="floor">自定义楼层</label>
              <label><input type="radio" name="floor">全部楼层</label>
            </div>
            <ul class="tree floor-tree">
              <li class="root"><label><input type="checkbox" class="partial" disabled>全部楼层</label></li>
              <li><label><input type="checkbox" disabled>首层</label></li>
              <li><label><input type="checkbox" disabled>第-1层</label></li>
              <li><label><input type="checkbox" disabled>第-2层</label></li>
              <li><label><input type="checkbox" disabled checked>第-3层</label></li>
              <li><label><input type="checkbox" disabled>基础层</label></li>
            </ul>
            <label class="others"><input type="checkbox">其他单项工程图元亮显</label>
          </div>
        </section>

        <div class="stack">
          <!-- Drawing management -->
          <section class="panel">
            <div class="panel-strip"><button aria-label="关闭">✕</button></div>
            <h2 class="panel-title">图纸管理</h2>
            <div class="panel-tools sheet-tools">
              <button class="tool"><svg class="icon"><use href="#i-newdoc"/></svg>添加</button>
              <button class="tool drop" disabled><svg class="icon"><use href="#i-locate"/></svg>定位</button>
              <button class="tool drop" disabled><svg class="icon"><use href="#i-divide"/></svg>手动分割</button>
              <button class="tool"><svg class="icon"><use href="#i-copydoc"/></svg>复制</button>
              <button class="overflow" aria-label="更多"><svg viewBox="0 0 8 6"><path class="kf" d="M0 0l3.500 3L0 6zM4.500 0L8 3 4.500 6z"/></svg></button>
            </div>
            <label class="panel-search tall"><input type="text" placeholder="搜索图纸..." aria-label="搜索图纸"><svg class="icon"><use href="#i-search"/></svg></label>
            <div class="scroll-area sheets">
              <table class="grid sheet-table">
                <colgroup><col class="c-no"><col class="c-sheet"><col class="c-scale"><col class="c-floor"><col></colgroup>
                <thead><tr><th></th><th class="sorted">图纸名称</th><th>比例</th><th>楼层</th><th>楼层编号</th></tr></thead>
                <tbody>
                  <tr><td>6</td><td class="t1"><b class="exp"></b>4照明平面图1...</td><td></td><td></td><td></td></tr>
                  <tr><td>7</td><td class="t2"><b class="exp"></b>模型</td><td>1:1</td><td>首层</td><td></td></tr>
                  <tr class="current"><td>8</td><td class="t3">地下三层...</td><td>1:1</td><td>第-3层</td><td>-3.2</td></tr>
                  <tr><td>9</td><td class="t3">地下二层...</td><td>1:1</td><td>第-2层</td><td>-2.2</td></tr>
                  <tr><td>10</td><td class="t3">地下一层...</td><td>1:1</td><td>第-1层</td><td>-1.2</td></tr>
                  <tr><td>11</td><td class="t1"><b class="exp"></b>1设计说明材...</td><td></td><td></td><td></td></tr>
                  <tr><td>12</td><td class="t4">模型</td><td>1:1</td><td>第-1层</td><td></td></tr>
                </tbody>
              </table>
              <div class="vbar sheet-bar"><i></i></div>
            </div>
            <div class="hbar"><b class="prev"></b><i></i><b class="next"></b></div>
          </section>

          <!-- CAD layers -->
          <section class="panel fill">
            <div class="panel-strip"><button aria-label="关闭">✕</button></div>
            <h2 class="panel-title">CAD图层</h2>
            <div class="panel-tools layer-tools">
              <button class="tool drop">选择相同颜色</button>
              <button class="tool drop">显示CAD图层</button>
              <button class="tool drop">显示CAD图元</button>
            </div>
            <table class="grid layer-table">
              <colgroup><col class="c-on"><col class="c-color"><col></colgroup>
              <thead><tr><th>开/关</th><th>颜色</th><th>名称</th></tr></thead>
              <tbody>
                <tr><td><input type="checkbox" aria-label="已提取的CAD图层"></td><td><b class="play"></b></td><td>已提取的CAD图层</td></tr>
                <tr><td><input type="checkbox" checked aria-label="CAD原始图层"></td><td><b class="play"></b></td><td>CAD原始图层</td></tr>
              </tbody>
            </table>
          </section>
        </div>
      </main>

      <footer class="status">
        <div class="readouts">
          <span>X = 64159.61 Y = 86069.46</span>
          <span>层高：4.2</span>
          <span>底标高：-14.55</span>
          <span>0</span>
          <span>隐藏：0</span>
        </div>
        <div class="status-tools">
          <button aria-label="正交"><svg class="icon" viewBox="0 0 16 16"><path class="k" d="M3 1v13h11M3 10h4v4"/></svg></button>
          <button aria-label="捕捉" class="drop on"><svg class="icon" viewBox="0 0 16 16"><rect class="k" x="2.500" y="2.500" width="11" height="11" rx="1"/><circle class="bw1" cx="3" cy="3" r="2"/></svg></button>
          <button aria-label="三维捕捉" class="drop"><svg class="icon" viewBox="0 0 16 16"><path class="k" d="M8 1l6 3.500v7L8 15l-6-3.500v-7zM2 4.500L8 8l6-3.500M8 8v7"/></svg></button>
          <button aria-label="交点"><svg class="icon" viewBox="0 0 16 16"><path class="k" d="M1 1l14 14M15 1L1 15"/><circle class="bf" cx="8" cy="8" r="1.500"/></svg></button>
          <button aria-label="角度" class="drop"><svg class="icon" viewBox="0 0 16 16"><path class="k" d="M12 1L2 13.500h12M7 7c2 1 3 3 3 6"/></svg></button>
          <button aria-label="偏移" class="drop"><svg class="icon" viewBox="0 0 16 16"><path class="k" d="M1 4.500h6M4 1.500v6"/><path class="kf" d="M7 10h8v4H7z"/></svg></button>
          <button aria-label="选择"><svg class="icon" viewBox="0 0 16 16"><path class="k" d="M2 2h10v11H2z"/><path class="kf" d="M4 4h7v7H4zM10 8v8l2-2h4z"/></svg></button>
          <button aria-label="折线"><svg class="icon" viewBox="0 0 16 16"><path class="k" d="M2 15C3 8 4 3 7 3l6 2M2 1v3"/><path class="kf" d="M10 8v7l2-2h3z"/></svg></button>
        </div>
        <span class="bright">CAD图亮度：100%</span>
        <div class="zoom">
          <button aria-label="降低"><svg class="icon" viewBox="0 0 16 16"><circle class="k" cx="8" cy="8" r="6.500"/><path class="b" d="M5 8h6"/></svg></button>
          <input type="range" min="0" max="100" value="100" aria-label="CAD图亮度">
          <button aria-label="提高"><svg class="icon" viewBox="0 0 16 16"><circle class="k" cx="8" cy="8" r="6.500"/><path class="b" d="M5 8h6M8 5v6"/></svg></button>
        </div>
        <span class="hint">左键选择桥架的两条边线和标识（可不选），右键确认或ESC退出</span>
      </footer>
    </div>

    <!-- Edge of the CAD window behind -->
    <aside class="behind">
      <svg viewBox="0 0 8 1040" preserveAspectRatio="xMinYMin slice">
        <path fill="#fff" d="M0 0h8v23H0z"/><path fill="#1b62a8" d="M3 4h5v14H3z"/><path fill="#ece8e5" d="M0 23h8v78H0z"/>
        <path fill="#cfe0f5" stroke="#3c74bd" d="M2.500 77.500h8v23h-8z"/><path fill="#111" d="M7 85h1v3H7zM7 91h1v2H7z"/>
        <path fill="#000" d="M0 101h8v917H0z"/>
        <path stroke="red" d="M1 514.500h7M1 564.500h7M1 615.500h7M1 665.500h7M1 715.500h7"/>
        <g fill="#ff0" font-size="15" font-family="Liberation Sans, sans-serif"><text x="1" y="508">K</text><text x="2" y="558">-</text><text x="1" y="608">K</text><text x="1" y="658">K</text><text x="0" y="710">Z</text></g>
        <path fill="#fff" d="M1 997l7 18v2H1z"/><path fill="#ece8e5" d="M0 1018h8v22H0z"/>
      </svg>
    </aside>
  </div>
  <div class="taskbar"><i class="task light"></i><i class="task dim"></i><time>11:06</time></div>
</body>
</html>
```
FILE: styles.css
```
/* Base */
*,
*::before,
*::after {
  box-sizing: border-box;
}

body {
  margin: 0;
  height: 100vh;
  display: flex;
  flex-direction: column;
  overflow: hidden;
  font: 12px/16px "Noto Sans", "Noto Sans CJK SC", sans-serif;
  color: #333;
  background: #fff;
}

button,
input,
select {
  font: inherit;
  color: inherit;
  margin: 0;
  padding: 0;
  border: 0;
  background: none;
}

button {
  display: flex;
  align-items: center;
  justify-content: center;
  white-space: nowrap;
}

h1,
h2,
ul {
  margin: 0;
  padding: 0;
  font-size: 12px;
  font-weight: 400;
  list-style: none;
}

/* Icons */
.sprite {
  position: absolute;
  width: 0;
  height: 0;
}

.icon {
  width: 15px;
  height: 15px;
  flex: none;
}

.k, .b, .g, .r, .s, .w, .k2, .b2 { fill: none; }
.k { stroke: #4b5468; }
.b { stroke: #1f78e6; }
.g { stroke: #b9b9b9; }
.r { stroke: #e02020; stroke-width: 1.5; }
.s { stroke: #8c8c8c; stroke-width: 1.5; }
.w { stroke: #4b5468; stroke-width: 1.5; }
.k2 { stroke: #4b5468; stroke-width: 2; }
.b2 { stroke: #1f78e6; stroke-width: 2; }
.kf { fill: #4b5468; }
.bf { fill: #1f78e6; }
.bd { fill: none; stroke: #1f78e6; stroke-dasharray: 1; }
.kw { fill: #fff; stroke: #4b5468; }
.bw { fill: #fff; stroke: #1f78e6; stroke-width: 2; }
.bw1 { fill: #fff; stroke: #1f78e6; }
.lb { fill: #d3e5fc; stroke: #1f78e6; }
.lb2 { fill: #d3e5fc; stroke: #1f78e6; stroke-width: 2; }

/* Shell */
.desktop {
  flex: 1;
  min-height: 0;
  display: flex;
}

.window {
  flex: 1;
  min-width: 0;
  display: flex;
  flex-direction: column;
}

.behind {
  width: 8px;
  background: #000;
}

.behind svg {
  display: block;
  width: 8px;
  height: 100%;
}

/* Header */
.header {
  display: flex;
  height: 41px;
  border-bottom: 1px solid #eee;
}

.logo {
  width: 36px;
  height: 36px;
  margin: 3px 7px 0;
}

.header-main {
  flex: 1;
}

.title-row {
  display: grid;
  grid-template-columns: 1fr auto 1fr;
  align-items: center;
  height: 21px;
  margin-left: -50px;
}

.quick {
  display: flex;
  padding-left: 49px;
}

.quick button {
  width: 26px;
  height: 20px;
}

.quick .split {
  width: 35px;
  justify-content: flex-start;
  padding-left: 6px;
  gap: 5px;
}

.quick .split::after,
.quick .more::after {
  content: "";
  border: 3px solid transparent;
  border-top: 4px solid #aaa;
  border-bottom: 0;
}

.quick .more {
  width: 17px;
}

.quick .more::after {
  border-top-color: #555;
}

.title {
  white-space: nowrap;
}

.win-buttons {
  display: flex;
  justify-content: flex-end;
}

.win-buttons button {
  width: 36px;
}

.win-buttons svg {
  width: 11px;
  height: 11px;
}

.menu-row {
  display: flex;
  justify-content: space-between;
  height: 19px;
}

.menu {
  display: flex;
}

.menu button {
  padding: 0 13px;
  height: 19px;
  margin-top: 1px;
}

.menu .active {
  background: #1a8cff;
  color: #fff;
  border-radius: 10px;
}

.account {
  display: flex;
  align-items: center;
  padding-right: 7px;
}

.avatar {
  width: 16px;
  height: 16px;
}

.account button {
  margin-left: 8px;
}

.account .user {
  margin-right: 11px;
}

.help {
  font-size: 15px;
}

.help::after {
  content: "";
  margin-left: 3px;
  border: 2px solid transparent;
  border-top: 3px solid #555;
  border-bottom: 0;
}

.search {
  display: flex;
  align-items: center;
  width: 149px;
  height: 17px;
  margin-left: 5px;
  padding: 0 5px 0 2px;
  border: 1px solid #ccc;
  border-radius: 3px;
}

.search input,
.panel-search input {
  flex: 1;
  min-width: 0;
  height: 16px;
}

input::placeholder {
  color: #999;
}

.search .icon,
.panel-search .icon {
  width: 12px;
  height: 12px;
}

.account .search + button {
  margin-left: 2px;
}

.fold {
  width: 14px;
  height: 8px;
}

/* Ribbon */
.ribbon {
  display: flex;
  height: 102px;
  padding-top: 2px;
  border-bottom: 1px solid #d9d9d9;
}

.group {
  display: flex;
  flex-direction: column;
  height: 95px;
  padding: 0 8px 0 7px;
  border-right: 1px solid #d9d9d9;
}

.group-body {
  display: flex;
  gap: 3px;
  height: 77px;
}

.col {
  display: flex;
  flex-direction: column;
  align-items: flex-start;
  gap: 4px;
  padding-top: 3px;
}

.tool {
  height: 19px;
  gap: 4px;
  padding: 0 0 0 2px;
  border-radius: 3px;
}

.tool::after,
.group-label.drop::after {
  content: "";
  width: 9px;
  border: 0 solid transparent;
  border-width: 4px 5px 0 4px;
}

.tool.drop::after {
  border-top-color: #888;
}

.tool:disabled {
  color: #b0b0b0;
}

.tool.active {
  background: #c2d9f2;
}

.big {
  flex-direction: column;
  justify-content: flex-start;
  gap: 5px;
  min-width: 44px;
  padding: 4px 4px 0;
}

.big svg {
  width: 30px;
  height: 30px;
}

.big.wide {
  width: 61px;
}

.group-label {
  display: flex;
  align-items: center;
  justify-content: center;
  gap: 6px;
  height: 18px;
}

.group-label.drop::after {
  width: 8px;
  border-width: 4px 4px 0;
  border-top-color: #777;
}

.icon-grid {
  display: grid;
  grid-template-columns: 30px 30px;
  grid-auto-rows: 19px;
  gap: 4px 0;
  padding-top: 3px;
}

/* Context bar */
.context-bar {
  display: flex;
  gap: 5px;
  height: 26px;
  padding: 1px 2px;
  background: #f0f0f0;
}

.pick {
  position: relative;
  width: 100px;
  height: 24px;
}

.pick select {
  appearance: none;
  width: 100%;
  height: 23px;
  padding-left: 4px;
  background: #fff;
  border: 1px solid #d9d9d9;
  border-radius: 3px;
}

.pick::after {
  content: "";
  position: absolute;
  right: 5px;
  top: 10px;
  border: 3px solid transparent;
  border-top: 4px solid #555;
  border-bottom: 0;
}

/* Work area */
.work {
  flex: 1;
  min-height: 0;
  display: grid;
  grid-template-columns: 173px 4px 284px 4px minmax(0, 1fr) 4px 366px 4px 317px 1px;
}

.work > * {
  min-height: 0;
}

.nav-panel { grid-column: 1; }
.nav-panel + .stack { grid-column: 3; }
.splitter.left { grid-column: 4; }
.canvas { grid-column: 5; }
.splitter.right { grid-column: 6; }
.display { grid-column: 7; }
.display + .stack { grid-column: 9; }

.stack {
  display: flex;
  flex-direction: column;
  gap: 4px;
}

.panel {
  display: flex;
  flex-direction: column;
  border: 1px solid #d9d9d9;
}

.fill {
  flex: 1;
  min-height: 0;
}

.panel-strip {
  display: flex;
  justify-content: flex-end;
  height: 11px;
  padding-right: 2px;
  background: #e6e6e6;
  border-bottom: 1px solid #d4d4d4;
}

.panel-strip button {
  width: 10px;
  height: 10px;
  font-size: 9px;
  line-height: 10px;
  color: #888;
}

.panel-title {
  height: 22px;
  padding-left: 8px;
  line-height: 21px;
  font-weight: 500;
  color: #777;
  background: #f0f0f0;
  border-bottom: 1px solid #d9d9d9;
}

.panel-title.light {
  font-weight: 400;
}

.panel-tools {
  display: flex;
  align-items: center;
  height: 27px;
  padding: 2px 0 0 2px;
  border-bottom: 1px solid #ddd;
}

.panel-tools .tool {
  gap: 5px;
  margin-right: 5px;
}

.panel-tools .tool.drop {
  margin-right: 3px;
}

.panel-tools .tool:not(.drop)::after {
  display: none;
}

.overflow {
  width: 11px;
  height: 20px;
  margin: 0 1px 0 auto;
  border: 1px solid #e6e6e6;
  border-radius: 3px;
}

.overflow svg {
  width: 8px;
  height: 6px;
}

.nav-tools {
  gap: 9px;
  padding-left: 5px;
}

.sheet-tools {
  padding-left: 4px;
}

.panel-search {
  display: flex;
  align-items: center;
  height: 20px;
  padding: 0 6px 0 2px;
  border-bottom: 1px solid #ddd;
}

.panel-search.tall {
  height: 25px;
}

/* Trees */
.tree li {
  display: flex;
  align-items: center;
  height: 24px;
  white-space: nowrap;
}

.tree .selected span {
  background: #c2d9f2;
}

.nav-tree {
  padding-top: 4px;
}

.node::before,
.l1::before,
.l2.open::before,
.root::before {
  content: "";
  width: 8px;
  flex: none;
  border: 0 solid transparent;
  border-width: 4px 4px 0;
  border-top-color: #888;
}

.node {
  padding-left: 9px;
  gap: 6px;
}

.node.closed::before {
  width: 4px;
  margin: 0 1px 0 3px;
  border-width: 4px 0 4px 4px;
  border-color: transparent transparent transparent #888;
}

.leaf {
  padding-left: 40px;
}

.leaf span {
  display: flex;
  align-items: center;
  gap: 7px;
  height: 21px;
  padding: 0 7px 0 3px;
  border-radius: 2px;
}

.scroll-area {
  display: flex;
  overflow: hidden;
}

.comp-tree {
  flex: 1;
  padding: 3px 0 1px;
}

.l1 {
  padding-left: 12px;
  gap: 3px;
}

.l2 {
  padding-left: 43px;
}

.l2.open {
  padding-left: 32px;
  gap: 3px;
}

.l3 {
  padding-left: 60px;
}

.l3 span {
  flex: 1;
  height: 21px;
  line-height: 21px;
  padding-left: 3px;
  border-radius: 2px;
  margin-right: 14px;
}

/* Scroll bars */
.vbar {
  display: flex;
  width: 12px;
  padding-right: 4px;
}

.vbar i {
  flex: 1;
  background: #c9c9c9;
  border-radius: 4px;
}

.comp-bar { padding-top: 16px; padding-bottom: 34px; }
.props-bar { margin-left: 4px; padding-top: 14px; padding-bottom: 53px; }
.sheet-bar { margin-left: 2px; padding-top: 75px; padding-bottom: 7px; }

.hbar {
  display: flex;
  align-items: center;
  gap: 4px;
  height: 20px;
  padding: 4px 20px 0 6px;
}

.hbar i {
  width: 204px;
  height: 8px;
  background: #c9c9c9;
  border-radius: 4px;
}

.hbar b {
  border: 4px solid transparent;
  border-width: 4px 0;
}

.hbar .prev { border-right: 4px solid #4b5468; }
.hbar .next { border-left: 4px solid #4b5468; margin-left: auto; }

/* Grids */
.grid {
  table-layout: fixed;
  border-collapse: separate;
  border-spacing: 0;
  width: 100%;
}

.grid th,
.grid td {
  height: 21px;
  padding: 0 4px 0 3px;
  border: 1px solid #d9d9d9;
  border-width: 0 1px 1px 0;
  font-weight: 400;
  line-height: 20px;
  text-align: left;
  white-space: nowrap;
  overflow: hidden;
}

.grid th,
.grid td:first-child {
  padding: 0;
  text-align: center;
}

.c-no { width: 22px; }

.props-table { width: 267px; flex: none; align-self: flex-start; }
.props-table .c-name { width: 115px; }
.props-table .c-val { width: 89px; }
.props-table td:last-child { text-align: center; }
.props-area { flex: 1; border-bottom: 1px solid #d9d9d9; }
.key { color: #1a5cff; }
.muted { color: #888; }

.exp {
  position: relative;
  display: inline-block;
  width: 13px;
  height: 13px;
  margin-right: 6px;
  vertical-align: -2px;
  border: 1px solid #888;
  border-radius: 2px;
}

.exp::before,
.exp.plus::after {
  content: "";
  position: absolute;
  left: 3px;
  top: 5px;
  width: 5px;
  height: 1px;
  background: #444;
}

.exp.plus::after {
  left: 5px;
  top: 3px;
  width: 1px;
  height: 5px;
}

.props-foot {
  height: 26px;
  padding: 0 9px;
}

.plain {
  width: 80px;
  height: 25px;
  border: 1px solid #c4c4c4;
  border-radius: 4px;
}

.sheets {
  border-top: 1px solid #d9d9d9;
  margin-top: 2px;
}

.sheet-table { flex: 1; width: auto; }
.c-sheet { width: 112px; }
.c-scale { width: 51px; }
.c-floor { width: 71px; }

.sheet-table td:nth-child(3),
.sheet-table td:nth-child(4) {
  text-align: center;
}

.sheet-table th:last-child,
.sheet-table td:last-child {
  border-right: 0;
}

.sheet-table td:last-child {
  padding-left: 5px;
}

.sheet-table th:last-child {
  text-align: left;
  padding-left: 1px;
}

.sheet-table .sorted,
.current td:first-child {
  background: #80bbfb;
  color: #fff;
  font-weight: 700;
}

.sheet-table .current td:not(:first-child) {
  background-color: #d3e8fd;
}

.sheet-table .current .t3 {
  box-shadow: inset 0 0 0 1px #777;
}

.sheet-table .t1 { padding-left: 2px; }
.sheet-table .t2 { padding-left: 12px; }
.sheet-table .t3 {
  padding-left: 41px;
  background-image: linear-gradient(#ddd, #ddd), linear-gradient(#ddd, #ddd);
  background-size: 1px 21px, 17px 1px;
  background-position: 18px 0, 18px 10px;
  background-repeat: no-repeat;
}
.sheet-table .t4 {
  padding-left: 31px;
  background: linear-gradient(#ddd, #ddd) 8px 0 / 1px 10px no-repeat, linear-gradient(#ddd, #ddd) 8px 10px / 17px 1px no-repeat;
}

.layer-tools {
  padding-left: 3px;
  border-radius: 0 0 3px 3px;
  height: 28px;
}

.layer-tools .tool.drop {
  gap: 5px;
  margin-right: 2px;
}

.layer-table {
  width: 238px;
  margin-top: 5px;
  border-top: 1px solid #d9d9d9;
}

.c-on { width: 51px; }
.c-color { width: 36px; }

.layer-table td {
  height: 26px;
}

.layer-table td:nth-child(2) {
  text-align: center;
}

.layer-table td:first-child {
  vertical-align: bottom;
  line-height: 16px;
}

.play {
  display: inline-block;
  border: 4px solid transparent;
  border-left: 8px solid #4b5468;
  border-right: 0;
}

/* Check boxes and radios */
input[type="checkbox"],
input[type="radio"] {
  appearance: none;
  position: relative;
  width: 14px;
  height: 14px;
  flex: none;
  border: 1px solid #888;
  border-radius: 2px;
  background: #fff;
  vertical-align: -2px;
}

input[type="checkbox"]:checked {
  background: #2b7de1;
  border-color: #2b7de1;
}

input[type="checkbox"]:checked::after {
  content: "";
  position: absolute;
  left: 3px;
  top: 0;
  width: 6px;
  height: 10px;
  border: solid #fff;
  border-width: 0 2px 2px 0;
  transform: rotate(40deg);
}

input[type="checkbox"]:disabled {
  background: #eee;
  border-color: #b0b0b0;
}

input[type="checkbox"]:disabled::after {
  border-color: #999;
}

input.partial:disabled {
  border-color: #999;
  box-shadow: inset 0 0 0 2px #eee, inset 0 0 0 3px #ccc;
}

input[type="radio"] {
  border-radius: 50%;
}

input[type="radio"]:checked::after {
  content: "";
  position: absolute;
  inset: 3px;
  border-radius: 50%;
  background: #1f78e6;
}

/* Splitters and canvas */
.splitter {
  display: flex;
  align-items: center;
}

.splitter i {
  width: 4px;
  height: 100px;
  background: #57606f;
}

.canvas {
  position: relative;
  background: #000;
  overflow: hidden;
}

.drawing {
  display: block;
  width: 100%;
  height: 100%;
}

.drawing path {
  fill: none;
}

.axis-lines { stroke: #333; }
.axis-lines .column { stroke: #555; }
.cad-red { stroke: #b40000; }
.cad-red.short { stroke: #d00000; }
.cad-blue { stroke: #00c; }
.cad-teal { stroke: #10b5b5; }
.cad-darkteal { stroke: #007c7c; stroke-width: 2; }
.cad-cyan { stroke: #14bdeb; }
.cad-cyan.dim { stroke: #1795ab; }
.tray { stroke: #8ab4ff; stroke-width: 5; }
.tray-core { stroke: #6285b8; }
.tray-red { stroke: #a98fc4; }
.tray-cyan { stroke: #5fb2ee; }
.y-axis { stroke: #0f0; stroke-width: 4; }
.x-axis { stroke: #f00; stroke-width: 4; }
.drawing .y-head { fill: #0f0; }
.drawing .x-head { fill: #f00; }

.ucs text {
  font: 14px "Liberation Sans", sans-serif;
}

.view-tools {
  position: absolute;
  top: 0;
  right: 0;
  display: flex;
  flex-direction: column;
  align-items: center;
  gap: 8px;
  width: 33px;
  height: 227px;
  padding-top: 12px;
  background: #fff;
  border: 1px solid #ddd;
  border-radius: 0 0 4px 4px;
}

.view-tools button {
  position: relative;
  flex-direction: column;
  gap: 7px;
}

.view-tools svg {
  width: 21px;
  height: 21px;
}

.view-tools .drop::after {
  content: "";
  border: 3px solid transparent;
  border-top: 4px solid #4b5468;
  border-bottom: 0;
}

.view-tools .drop + .drop {
  margin-top: -1px;
}

.view-tools hr {
  width: 23px;
  margin: -3px 0 -2px;
  border: 0;
  border-top: 1px solid #4b5468;
}

.cube3d span {
  position: absolute;
  left: 3px;
  top: 9px;
  font: 700 7px/10px "Noto Sans", sans-serif;
  color: #1f78e6;
}

/* Display settings */
.display {
  border-color: #d9d9d9 transparent transparent;
}

.tabs {
  display: flex;
  align-items: flex-end;
  gap: 3px;
  height: 26px;
  padding-left: 2px;
}

.tabs button {
  width: 60px;
  height: 21px;
  background: #dcdcdc;
  border-radius: 3px 3px 0 0;
}

.tabs .active {
  width: 62px;
  height: 24px;
  margin-bottom: -1px;
  color: #1f78e6;
  background: #fff;
  border: 1px solid #c4c8cf;
  border-bottom: 0;
}

.tab-page {
  flex: 1;
  display: flex;
  flex-direction: column;
  border: 1px solid #c4c8cf;
}

.radios {
  display: grid;
  grid-template-columns: repeat(4, 90px);
  height: 28px;
  padding-left: 6px;
  color: #000;
}

.radios label {
  display: flex;
  align-items: center;
  gap: 7px;
  white-space: nowrap;
}

.floor-tree {
  flex: 1;
  padding: 3px 0 0 8px;
  border: 1px solid #c4c8cf;
  border-left: 0;
  color: #777;
}

.floor-tree li {
  padding-left: 36px;
}

.floor-tree .root {
  padding-left: 2px;
  gap: 6px;
}

.floor-tree label,
.others {
  display: flex;
  align-items: center;
  gap: 8px;
}

.others {
  height: 39px;
  gap: 3px;
}

/* Status bar */
.status {
  display: flex;
  align-items: center;
  height: 31px;
  padding-left: 2px;
  background: #fbfbfb;
  white-space: nowrap;
}

.readouts {
  display: grid;
  grid-template-columns: 263px 113px 133px 103px 103px;
}

.status-tools {
  display: flex;
  gap: 3px;
}

.status button {
  width: 25px;
  height: 25px;
  border: 1px solid #999;
  border-radius: 3px;
}

.status .drop {
  width: 36px;
  gap: 5px;
}

.status .drop::after {
  content: "";
  border: 2px solid transparent;
  border-top: 4px solid #555;
  border-bottom: 0;
}

.status .on {
  background: #d3e5fc;
  border-color: #1f78e6;
}

.bright {
  width: 113px;
  margin-left: 6px;
}

.zoom {
  display: flex;
  align-items: center;
}

.zoom input {
  appearance: none;
  width: 45px;
  height: 20px;
  background: linear-gradient(#c9c9c9, #c9c9c9) center / 100% 2px no-repeat;
}

.zoom input::-webkit-slider-thumb {
  appearance: none;
  width: 9px;
  height: 18px;
  background: #eee;
  border: 1px solid #666;
  border-radius: 3px;
}

/* Taskbar */
.taskbar {
  display: flex;
  height: 8px;
  padding-left: 48px;
  overflow: hidden;
  background: linear-gradient(90deg, #20363f, #22343f 60%, #17263f);
}

.task {
  height: 8px;
}

.task.light {
  width: 344px;
  background: #f0f0f0;
}

.task.dim {
  width: 48px;
  margin-left: 197px;
  background: #4b5c64;
}

.taskbar time {
  margin: 2px 82px 0 auto;
  color: #fff;
}
```
